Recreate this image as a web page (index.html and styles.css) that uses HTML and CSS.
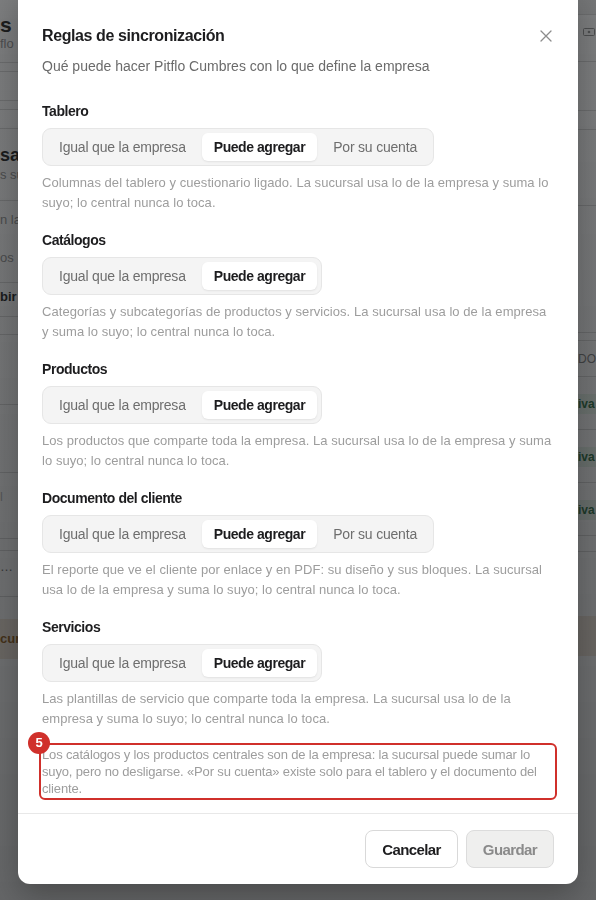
FILE: index.html
```html
<!DOCTYPE html>
<html lang="es">
<head>
<meta charset="utf-8">
<title>Reglas de sincronización</title>
<link rel="stylesheet" href="styles.css">
</head>
<body>
<div class="bg">
  <div class="bg-left">
    <div class="sp14"></div>
    <div class="t-big">s</div>
    <div class="t-sm">flo</div>
    <div class="ln h11"></div>
    <div class="ln h9"></div>
    <div class="ln h29"></div>
    <div class="ln h9"></div>
    <div class="ln h19"></div>
    <div class="sp16"></div>
    <div class="t-mid">sa</div>
    <div class="t-row">s su</div>
    <div class="ln h16"></div>
    <div class="t-row pad">n la</div>
    <div class="t-row pad">os</div>
    <div class="ln h6"></div>
    <div class="t-row bold">bir l</div>
    <div class="ln h6"></div>
    <div class="ln h18"></div>
    <div class="ln h70"></div>
    <div class="ln h68"></div>
    <div class="t-row light">l</div>
    <div class="ln h18"></div>
    <div class="ln h12"></div>
    <div class="t-row sel">… <span class="chev">⌄</span></div>
    <div class="ln h14"></div>
    <div class="sp22"></div>
    <div class="band">cur</div>
  </div>
  <div class="bg-right">
    <div class="ln top h15"></div>
    <div class="r-icon"><svg width="12" height="8" viewBox="0 0 12 8"><rect x="0.5" y="0.5" width="11" height="7" rx="1" fill="none" stroke="#999"/><circle cx="6" cy="4" r="1.3" fill="#999"/></svg></div>
    <div class="ln h14"></div>
    <div class="ln h49"></div>
    <div class="ln h19"></div>
    <div class="ln h76"></div>
    <div class="ln h127"></div>
    <div class="ln h8"></div>
    <div class="head-cell">DO</div>
    <div class="badge-row"><span class="badge">tiva</span></div>
    <div class="badge-row"><span class="badge">tiva</span></div>
    <div class="badge-row"><span class="badge">tiva</span></div>
    <div class="ln h16"></div>
    <div class="sp64"></div>
    <div class="band"></div>
  </div>
</div>
<div class="overlay"></div>

<div class="modal" role="dialog" aria-labelledby="dlg-title">
  <div class="modal-body">
    <div class="modal-head">
      <h2 id="dlg-title" class="modal-title">Reglas de sincronización</h2>
      <button class="close" aria-label="Cerrar">
        <svg width="16" height="16" viewBox="0 0 16 16"><path d="M3 3 L13 13 M13 3 L3 13" stroke="#8c8c8c" stroke-width="1.3" stroke-linecap="round" fill="none"/></svg>
      </button>
    </div>
    <p class="modal-sub">Qué puede hacer Pitflo Cumbres con lo que define la empresa</p>

    <section class="rule">
      <h3 class="rule-label">Tablero</h3>
      <div class="seg">
        <span class="seg-btn">Igual que la empresa</span>
        <span class="seg-btn on">Puede agregar</span>
        <span class="seg-btn">Por su cuenta</span>
      </div>
      <p class="rule-desc">Columnas del tablero y cuestionario ligado. La sucursal usa lo de la empresa y suma lo suyo; lo central nunca lo toca.</p>
    </section>

    <section class="rule">
      <h3 class="rule-label">Catálogos</h3>
      <div class="seg">
        <span class="seg-btn">Igual que la empresa</span>
        <span class="seg-btn on">Puede agregar</span>
      </div>
      <p class="rule-desc">Categorías y subcategorías de productos y servicios. La sucursal usa lo de la empresa y suma lo suyo; lo central nunca lo toca.</p>
    </section>

    <section class="rule">
      <h3 class="rule-label">Productos</h3>
      <div class="seg">
        <span class="seg-btn">Igual que la empresa</span>
        <span class="seg-btn on">Puede agregar</span>
      </div>
      <p class="rule-desc">Los productos que comparte toda la empresa. La sucursal usa lo de la empresa y suma lo suyo; lo central nunca lo toca.</p>
    </section>

    <section class="rule">
      <h3 class="rule-label">Documento del cliente</h3>
      <div class="seg">
        <span class="seg-btn">Igual que la empresa</span>
        <span class="seg-btn on">Puede agregar</span>
        <span class="seg-btn">Por su cuenta</span>
      </div>
      <p class="rule-desc">El reporte que ve el cliente por enlace y en PDF: su diseño y sus bloques. La sucursal usa lo de la empresa y suma lo suyo; lo central nunca lo toca.</p>
    </section>

    <section class="rule">
      <h3 class="rule-label">Servicios</h3>
      <div class="seg">
        <span class="seg-btn">Igual que la empresa</span>
        <span class="seg-btn on">Puede agregar</span>
      </div>
      <p class="rule-desc">Las plantillas de servicio que comparte toda la empresa. La sucursal usa lo de la empresa y suma lo suyo; lo central nunca lo toca.</p>
    </section>

    <p class="note">
      <span class="mark">5</span>Los catálogos y los productos centrales son de la empresa: la sucursal puede sumar lo suyo, pero no desligarse. «Por su cuenta» existe solo para el tablero y el documento del cliente.
    </p>
  </div>
  <div class="modal-foot">
    <button class="btn">Cancelar</button>
    <button class="btn btn-disabled">Guardar</button>
  </div>
</div>
</body>
</html>
```

FILE: styles.css
```css
* { box-sizing: border-box; }

html, body {
  margin: 0;
  padding: 0;
  height: 100%;
  overflow: hidden;
}

body {
  font-family: "Liberation Sans", Arial, "Helvetica Neue", sans-serif;
  color: #1d1d1f;
  background: #fbfbfb;
}

/* ---------- background page (under the overlay) ---------- */
.bg {
  display: flex;
  justify-content: space-between;
  height: 900px;
}

.bg-left {
  width: 40px;
  white-space: nowrap;
}

.bg-right {
  width: 40px;
  white-space: nowrap;
}

.ln { border-bottom: 1px solid #d8d8d8; }
.top { background: #ececec; }
.h6 { height: 6px; } .h8 { height: 8px; } .h9 { height: 9px; } .h11 { height: 11px; }
.h12 { height: 12px; } .h14 { height: 14px; } .h15 { height: 15px; } .h16 { height: 16px; }
.h18 { height: 18px; } .h19 { height: 19px; } .h29 { height: 29px; } .h49 { height: 49px; }
.h68 { height: 68px; } .h70 { height: 70px; } .h76 { height: 76px; } .h127 { height: 127px; }
.sp14 { height: 14px; } .sp16 { height: 16px; } .sp22 { height: 22px; } .sp64 { height: 64px; }

.t-big { font-size: 21px; font-weight: 700; line-height: 22px; color: #333; }
.t-sm { font-size: 13px; line-height: 16px; color: #999; }
.t-mid { font-size: 18px; font-weight: 700; line-height: 20px; color: #333; }
.t-row { font-size: 13px; line-height: 20px; color: #999; }
.t-row.pad { padding: 9px 0; }
.t-row.bold { font-weight: 700; color: #333; padding: 4px 0; }
.t-row.light { padding: 14px 0; color: #bbb; }
.t-row.sel { padding: 6px 0; color: #777; }
.chev { font-size: 12px; }

.band {
  height: 40px;
  background: #f1e7dc;
  color: #9b6b2f;
  font-size: 13px;
  font-weight: 700;
  line-height: 40px;
}

.r-icon {
  height: 33px;
  padding: 13px 0 0 27px;
  line-height: 0;
}

.head-cell {
  height: 36px;
  line-height: 36px;
  font-size: 12px;
  color: #888;
  padding-left: 22px;
  border-bottom: 1px solid #d8d8d8;
}

.badge-row {
  height: 53px;
  padding-top: 17px;
  padding-left: 18px;
  border-bottom: 1px solid #d8d8d8;
}

.badge {
  display: inline-block;
  background: #e6f2e9;
  color: #3d7a52;
  font-size: 12px;
  font-weight: 700;
  line-height: 20px;
  padding: 0 2px 0 0;
}

.overlay {
  position: fixed;
  inset: 0;
  background: linear-gradient(to bottom, rgba(8, 10, 12, 0.52), rgba(8, 10, 12, 0.62));
}

/* ---------- modal ---------- */
.modal {
  position: fixed;
  left: 18px;
  top: -12px;
  width: 560px;
  background: #fff;
  border-radius: 12px;
  box-shadow: 0 12px 32px rgba(0, 0, 0, 0.28);
  display: flex;
  flex-direction: column;
}

.modal-body {
  padding: 36px 24px 16px;
}

.modal-head {
  display: flex;
  align-items: center;
  justify-content: space-between;
}

.modal-title {
  margin: 0;
  font-size: 16px;
  line-height: 24px;
  font-weight: 700;
  letter-spacing: -0.4px;
  color: #1d1d1f;
}

.close {
  width: 16px;
  height: 16px;
  padding: 0;
  border: 0;
  background: none;
  line-height: 0;
  cursor: pointer;
}

.modal-sub {
  margin: 8px 0 25px;
  font-size: 14px;
  line-height: 20px;
  color: #6b6b6b;
}

.rule {
  margin-bottom: 17px;
}

.rule-label {
  margin: 0 0 7px;
  font-size: 14px;
  line-height: 20px;
  font-weight: 700;
  letter-spacing: -0.45px;
  color: #1d1d1f;
}

.seg {
  display: inline-flex;
  gap: 4px;
  padding: 4px;
  background: #f4f4f4;
  border: 1px solid #e6e6e6;
  border-radius: 9px;
  margin-bottom: 7px;
  vertical-align: top;
}

.seg-btn {
  height: 28px;
  line-height: 28px;
  padding: 0 12px;
  font-size: 14px;
  letter-spacing: -0.2px;
  color: #6e6e6e;
  border-radius: 6px;
  white-space: nowrap;
}

.seg-btn.on {
  background: #fff;
  color: #1d1d1f;
  font-weight: 700;
  letter-spacing: -0.45px;
  box-shadow: 0 1px 2px rgba(0, 0, 0, 0.08);
}

.rule-desc {
  margin: 0;
  font-size: 13px;
  line-height: 20px;
  letter-spacing: 0.05px;
  color: #9d9d9d;
}

.note {
  position: relative;
  margin: 0;
  font-size: 13px;
  line-height: 17px;
  color: #9d9d9d;
  letter-spacing: -0.15px;
  outline: 2px solid #d0302b;
  outline-offset: 1px;
  border-radius: 3px;
}

.mark {
  position: absolute;
  left: -14px;
  top: -14px;
  width: 22px;
  height: 22px;
  border-radius: 50%;
  background: #d0302b;
  color: #fff;
  font-size: 13px;
  font-weight: 700;
  line-height: 22px;
  text-align: center;
  letter-spacing: 0;
}

.modal-foot {
  display: flex;
  justify-content: flex-end;
  gap: 8px;
  padding: 16px 24px;
  border-top: 1px solid #e8e8e8;
}

.btn {
  height: 38px;
  padding: 0 16px;
  font-family: inherit;
  font-size: 15px;
  font-weight: 700;
  letter-spacing: -0.6px;
  color: #1d1d1f;
  background: #fff;
  border: 1px solid #d9d9d9;
  border-radius: 8px;
  cursor: pointer;
}

.btn-disabled {
  background: #efefee;
  color: #8a8a8a;
  border-color: #dcdcdc;
  cursor: default;
}
```
